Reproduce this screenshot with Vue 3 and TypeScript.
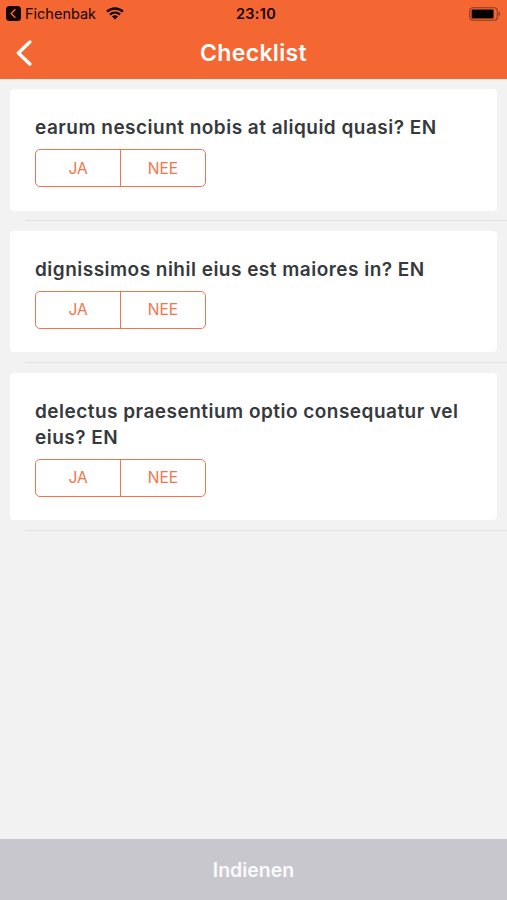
<script setup lang="ts">
import { ref } from 'vue'

interface Question {
  id: number
  text: string
  answer: 'ja' | 'nee' | null
}

const questions = ref<Question[]>([
  { id: 1, text: 'earum nesciunt nobis at aliquid quasi? EN', answer: null },
  { id: 2, text: 'dignissimos nihil eius est maiores in? EN', answer: null },
  { id: 3, text: 'delectus praesentium optio consequatur vel eius? EN', answer: null },
])
</script>

<template>
  <div class="screen">
    <header class="header">
      <div class="status">
        <div class="status-left">
          <svg class="return-icon" viewBox="0 0 15 15">
            <rect width="15" height="15" rx="3.5" fill="#140501" />
            <path d="M9 3.8 5.2 7.5 9 11.2" fill="none" stroke="#f46a35" stroke-width="1.5" stroke-linecap="round" stroke-linejoin="round" />
          </svg>
          <span class="app-name">Fichenbak</span>
          <svg class="wifi" viewBox="0 0 18 13">
            <g fill="none" stroke="#140501" stroke-width="2.3">
              <path d="M1 4.7C5.6.4 12.4.4 17 4.7" />
              <path d="M3.9 7.7C6.9 5 11.1 5 14.1 7.7" />
            </g>
            <path d="M9 12.4 6 9.4C7.7 7.9 10.3 7.9 12 9.4Z" fill="#140501" />
          </svg>
        </div>
        <span class="clock">23:10</span>
        <svg class="battery" viewBox="0 0 32 14">
          <rect x=".7" y=".7" width="27.6" height="12.6" rx="3" fill="none" stroke="#8c3a1b" stroke-width="1.1" />
          <rect x="2.6" y="2.4" width="22" height="9.2" rx="1" fill="#050100" />
          <path d="M29.6 4.8C31.7 5.3 31.7 8.7 29.6 9.2Z" fill="#8c3a1b" />
        </svg>
      </div>
      <nav class="nav">
        <button class="back" aria-label="Terug">
          <svg viewBox="0 0 16 26">
            <path d="M13.8 2 2.4 13 13.8 24" fill="none" stroke="#fff" stroke-width="3.4" stroke-linecap="round" stroke-linejoin="round" />
          </svg>
        </button>
        <h1 class="title">Checklist</h1>
      </nav>
    </header>

    <main class="list">
      <section v-for="q in questions" :key="q.id" class="row">
        <div class="card">
          <p class="question">{{ q.text }}</p>
          <div class="segments">
            <button class="segment" @click="q.answer = 'ja'">JA</button>
            <button class="segment" @click="q.answer = 'nee'">NEE</button>
          </div>
        </div>
        <div class="separator"></div>
      </section>
    </main>

    <button class="submit">Indienen</button>
  </div>
</template>

<style>
body {
  margin: 0;
}
</style>

<style scoped>
.screen {
  display: flex;
  flex-direction: column;
  height: 900px;
  background: #f2f2f2;
  font-family: Inter, 'Liberation Sans', sans-serif;
}
button {
  margin: 0;
  padding: 0;
  border: 0;
  background: none;
  font-family: inherit;
}
.header {
  box-sizing: border-box;
  height: 79.4px;
  flex: none;
  background: #f46733;
}
.status {
  display: grid;
  grid-template-columns: 1fr auto 1fr;
  align-items: center;
  height: 27px;
  padding: 0 6px 0 6px;
  color: #140501;
}
.status-left {
  display: flex;
  align-items: center;
}
.return-icon {
  width: 15px;
  height: 15px;
}
.app-name {
  margin-left: 4px;
  font-size: 14.5px;
}
.wifi {
  width: 18px;
  height: 13px;
  margin-left: 10px;
}
.clock {
  padding-left: 5px;
  font-size: 14.5px;
  font-weight: 600;
  letter-spacing: 0.3px;
}
.battery {
  width: 32px;
  height: 14px;
  justify-self: end;
}
.nav {
  display: grid;
  grid-template-columns: 50px 1fr 50px;
  align-items: center;
  height: 52px;
}
.back {
  display: flex;
  padding-left: 16px;
}
.back svg {
  width: 16px;
  height: 26px;
}
.title {
  margin: 0;
  color: #fff;
  font-size: 23px;
  font-weight: 600;
  line-height: 30px;
  letter-spacing: 0.35px;
  text-align: center;
}
.list {
  flex: 1;
}
.row {
  padding-top: 9.8px;
}
.card {
  margin: 0 10px;
  padding: 26px 25px 23.5px;
  border-radius: 4px;
  background: #fff;
}
.question {
  margin: 0;
  color: #36393d;
  font-size: 19px;
  font-weight: 600;
  line-height: 26px;
  letter-spacing: 0.48px;
}
.segments {
  display: flex;
  box-sizing: border-box;
  width: 171px;
  height: 38px;
  margin-top: 8px;
  border: 1.4px solid #f1754b;
  border-radius: 5px;
}
.segment {
  flex: 1;
  color: #f1754b;
  font-size: 15.5px;
}
.segment + .segment {
  border-left: 1.4px solid #f1754b;
}
.separator {
  height: 1px;
  margin: 9.5px 0 0 25px;
  background: #e0e0e1;
}
.submit {
  flex: none;
  height: 61px;
  background: #c8c7cd;
  color: #fafafb;
  font-size: 19.5px;
  font-weight: 600;
}
</style>
